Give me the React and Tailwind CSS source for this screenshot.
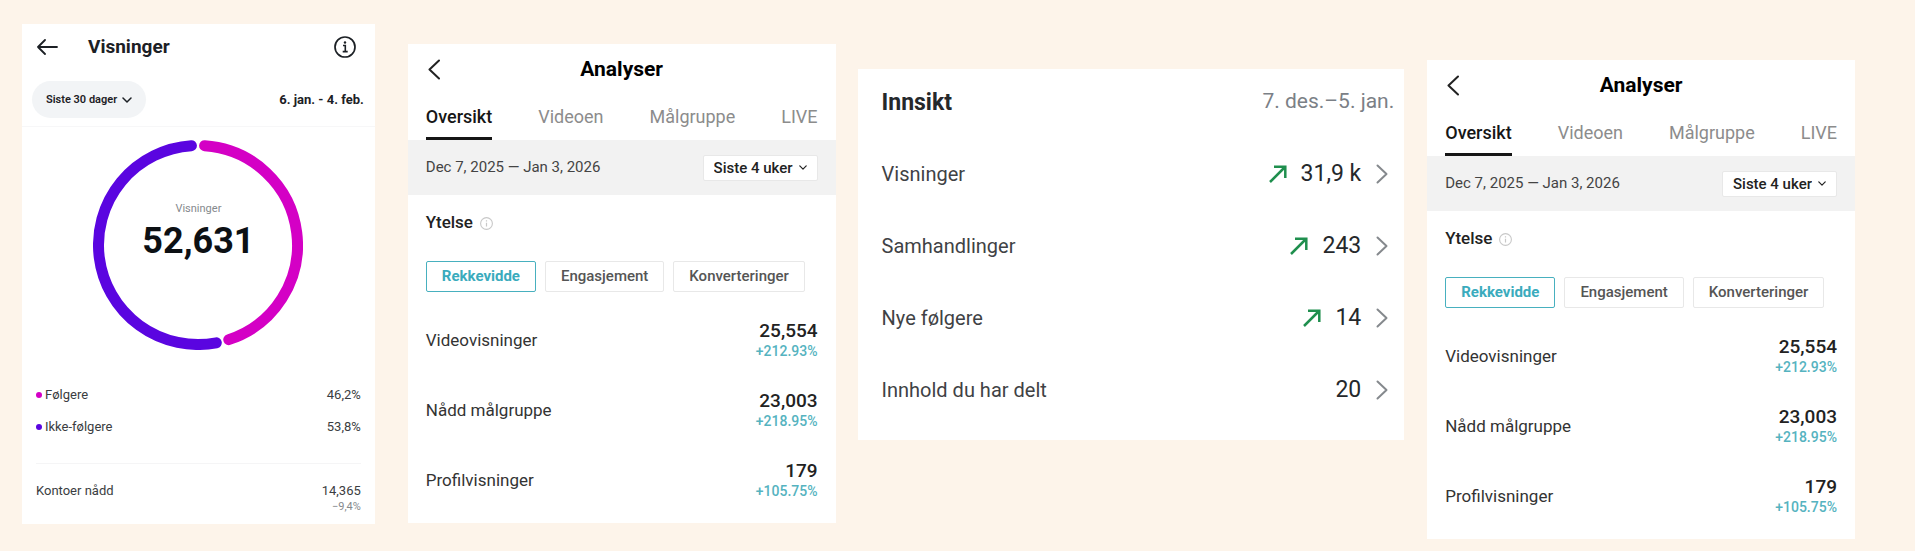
import React, { useState } from "react";

const followers = [
  { name: "Følgere", value: "46,2%", dot: "bg-[#d400c5]" },
  { name: "Ikke-følgere", value: "53,8%", dot: "bg-[#5a05e0]" }
];

const tabs = ["Oversikt", "Videoen", "Målgruppe", "LIVE"];

const filters = ["Rekkevidde", "Engasjement", "Konverteringer"];

const performance = [
  { name: "Videovisninger", value: "25,554", change: "+212.93%" },
  { name: "Nådd målgruppe", value: "23,003", change: "+218.95%" },
  { name: "Profilvisninger", value: "179", change: "+105.75%" }
];

const insights = [
  { name: "Visninger", value: "31,9 k", up: true },
  { name: "Samhandlinger", value: "243", up: true },
  { name: "Nye følgere", value: "14", up: true },
  { name: "Innhold du har delt", value: "20", up: false }
];

function ChevronDown({ className }) {
  return (
    <svg viewBox="0 0 10 6" fill="none" stroke="currentColor" className={className} aria-hidden="true">
      <path d="M1 1l4 4 4-4" strokeWidth="1.5" strokeLinecap="round" strokeLinejoin="round" />
    </svg>
  );
}

// Point on the ring, angle in degrees clockwise from the top
function ringPoint(angle) {
  const rad = (angle * Math.PI) / 180;
  return `${105 + 99.5 * Math.sin(rad)} ${105 - 99.5 * Math.cos(rad)}`;
}

function Ring() {
  return (
    <svg viewBox="0 0 210 210" fill="none" strokeWidth="11" strokeLinecap="round" className="col-start-1 row-start-1 size-[210px]" aria-hidden="true">
      <path d={`M${ringPoint(3.8)} A99.5 99.5 0 0 1 ${ringPoint(162)}`} stroke="#d400c5" />
      <path d={`M${ringPoint(169.4)} A99.5 99.5 0 1 1 ${ringPoint(356.2)}`} stroke="#5a05e0" />
    </svg>
  );
}

function ViewsCard() {
  return (
    <section className="min-w-0 flex-[353] mt-6 bg-white text-[#1c2025]">
      <header className="flex items-center h-[46px] pl-[15px] pr-[19px]">
        <button aria-label="Tilbake">
          <svg viewBox="0 0 21 16" fill="none" stroke="currentColor" strokeWidth="1.8" strokeLinecap="round" strokeLinejoin="round" className="w-[21px] h-4">
            <path d="M8 1L1 8l7 7M1 8h19" />
          </svg>
        </button>
        <h2 className="ml-[30px] text-[19px] leading-7 font-bold">Visninger</h2>
        <button aria-label="Informasjon" className="ml-auto">
          <svg viewBox="0 0 22 22" fill="none" stroke="currentColor" className="size-[22px]">
            <circle cx="11" cy="11" r="10" strokeWidth="1.7" />
            <path d="M9 9.500h2.300v6M8.700 15.600h5" strokeWidth="1.600" />
            <circle cx="11" cy="6.500" r="1.200" fill="currentColor" stroke="none" />
          </svg>
        </button>
      </header>

      <div className="flex items-center justify-between h-[57px] pt-[3px] pl-[10px] pr-[11px] border-b border-[#f7f7f8]">
        <div className="flex items-center gap-1 h-[37px] px-[14px] rounded-full bg-[#f2f4f6]">
          <select aria-label="Periode" className="appearance-none pt-px text-[11px] leading-4 font-semibold">
            <option>Siste 30 dager</option>
          </select>
          <ChevronDown className="w-[10px] h-[6px]" />
        </div>
        <p className="text-[13px] font-bold">6. jan. - 4. feb.</p>
      </div>

      <div className="grid place-items-center mt-[13px]">
        <Ring />
        <div className="col-start-1 row-start-1 mb-7 text-center">
          <p className="mb-1 text-[11px] leading-4 text-[#85898d]">Visninger</p>
          <p className="text-4xl font-bold text-[#0c1014]">52,631</p>
        </div>
      </div>

      <dl className="mx-[14px] mt-[29px] pb-5 border-b border-[#f5f5f6] text-[13px] text-[#3a3d41]">
        {followers.map((item) => (
          <div key={item.name} className="flex items-center h-8">
            <span className={`size-[6px] mr-[3px] rounded-full ${item.dot}`} />
            <dt>{item.name}</dt>
            <dd className="ml-auto">{item.value}</dd>
          </div>
        ))}
      </dl>
      <dl className="flex justify-between mx-[14px] pt-[18px] pb-[10px] text-[#3a3d41]">
        <dt className="text-[13px] leading-[18px]">Kontoer nådd</dt>
        <dd className="text-right text-[13px] leading-[18px]">
          14,365
          <span className="block text-[11px] leading-[14px] text-[#85898d]">−9,4%</span>
        </dd>
      </dl>
    </section>
  );
}

function AnalyticsCard({ className }) {
  const [tab, setTab] = useState("Oversikt");
  const [filter, setFilter] = useState("Rekkevidde");

  return (
    <section className={`min-w-0 flex-[428] bg-white text-[#222] ${className}`}>
      <header className="grid grid-cols-[1fr_auto_1fr] items-center h-[50px] px-5">
        <button aria-label="Tilbake" className="justify-self-start">
          <svg viewBox="0 0 12 21" fill="none" stroke="currentColor" strokeWidth="2" strokeLinecap="round" strokeLinejoin="round" className="w-3 h-[21px]">
            <path d="M11 1.500L1.500 10.500 11 19.500" />
          </svg>
        </button>
        <h2 className="text-[21px] leading-7 font-bold text-black">Analyser</h2>
      </header>

      <nav className="flex justify-between h-[46px] px-[18px]">
        {tabs.map((name) => (
          <button
            key={name}
            onClick={() => setTab(name)}
            className={`pt-[3px] border-b-[3px] text-lg ${
              tab === name
                ? "border-[#161616] text-[#161616] font-medium"
                : "border-transparent text-[#8c8c8c]"
            }`}
          >
            {name}
          </button>
        ))}
      </nav>

      <div className="flex items-center justify-between h-[55px] px-[18px] bg-[#f2f2f2]">
        <p className="text-[15px] text-[#444]">Dec 7, 2025 — Jan 3, 2026</p>
        <div className="flex items-center gap-[6px] h-[26px] px-[10px] border border-[#e8e8e8] rounded-xs bg-white">
          <select aria-label="Periode" className="appearance-none text-[15px] leading-5 font-medium">
            <option>Siste 4 uker</option>
          </select>
          <ChevronDown className="w-2 h-[5px]" />
        </div>
      </div>

      <div className="flex items-center gap-[7px] h-14 px-[18px]">
        <h3 className="text-[17px] font-medium">Ytelse</h3>
        <svg viewBox="0 0 13 13" fill="none" stroke="#c8c8c8" className="size-[13px]" aria-hidden="true">
          <circle cx="6.500" cy="6.500" r="5.900" strokeWidth="1.100" />
          <path d="M6.500 5.800v3.700M6.500 3.300v1.300" strokeWidth="1.200" />
        </svg>
      </div>

      <div className="flex gap-[9px] mt-[10px] px-[18px]">
        {filters.map((name) => (
          <button
            key={name}
            onClick={() => setFilter(name)}
            className={`h-[31px] px-[15px] border rounded-xs text-[15px] ${
              filter === name
                ? "border-[#48b0bf] text-[#3aabbd] font-bold"
                : "border-[#e8e8e8] text-[#555] font-medium"
            }`}
          >
            {name}
          </button>
        ))}
      </div>

      <dl className="mt-[14px] pb-[7px] px-[18px]">
        {performance.map((item) => (
          <div key={item.name} className="flex items-center justify-between h-[70px]">
            <dt className="text-[17px] text-[#333]">{item.name}</dt>
            <dd className="text-right text-[19px] leading-5 font-medium">
              {item.value}
              <span className="block text-sm leading-5 text-[#55b3c0]">{item.change}</span>
            </dd>
          </div>
        ))}
      </dl>
    </section>
  );
}

function InsightsCard() {
  return (
    <section className="min-w-0 flex-[547] ml-[22px] mt-[69px] pb-[14px] bg-white">
      <header className="flex items-center justify-between h-[69px] pl-6 pr-[10px]">
        <h2 className="text-[23px] font-bold text-[#25282b]">Innsikt</h2>
        <p className="pb-1 text-[21px] text-[#7b8086]">7. des.–5. jan.</p>
      </header>
      <ul>
        {insights.map((item) => (
          <li key={item.name}>
            <button className="flex items-center w-full h-[72px] pl-6 pr-4">
              <span className="mr-auto text-xl text-[#3f4245]">{item.name}</span>
              {item.up && (
                <svg viewBox="0 0 18 18" fill="none" stroke="#1f8f4e" strokeWidth="2.500" className="size-[18px] mr-[14px]" aria-hidden="true">
                  <path d="M1 17L16 2M5 1.700H16.300V13" />
                </svg>
              )}
              <span className="text-[23px] text-[#25282b]">{item.value}</span>
              <svg viewBox="0 0 12 20" fill="none" stroke="#85898d" strokeWidth="2" strokeLinecap="round" strokeLinejoin="round" className="w-3 h-5 ml-[15px]" aria-hidden="true">
                <path d="M1.500 1.500L10.500 10l-9 8.500" />
              </svg>
            </button>
          </li>
        ))}
      </ul>
    </section>
  );
}

export default function App() {
  return (
    <main className="flex items-start min-h-screen pl-[22px] pr-[60px] bg-[#fdf4ea] font-['Roboto','Liberation_Sans',sans-serif]">
      <ViewsCard />
      <AnalyticsCard className="ml-[33px] mt-11" />
      <InsightsCard />
      <AnalyticsCard className="ml-[23px] mt-[60px]" />
    </main>
  );
}
